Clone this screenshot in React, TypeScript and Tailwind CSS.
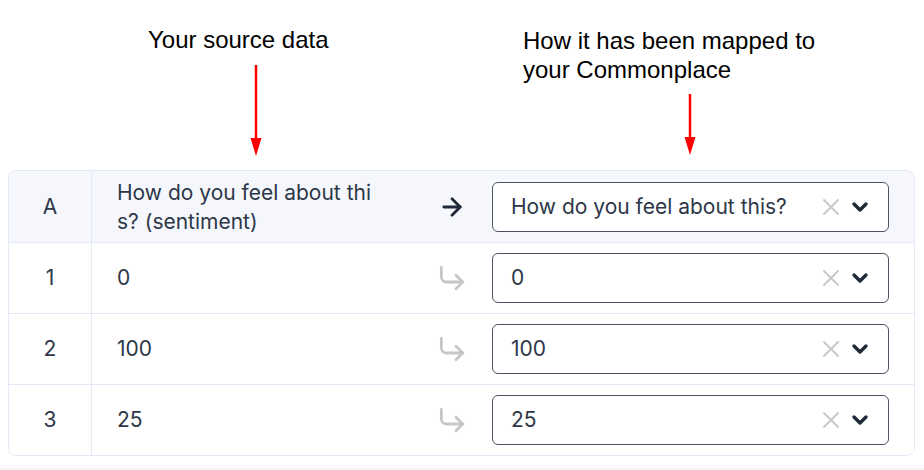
import React from "react";
import { ArrowRight, CornerDownRight, X, ChevronDown } from "lucide-react";

function RedArrow({ h }: { h: number }) {
  return (
    <svg width="14" height={h} viewBox={`0 0 14 ${h}`} className="block">
      <line x1="7" y1="0" x2="7" y2={h - 16} stroke="#ff0000" strokeWidth="2.5" />
      <polygon points={`1.5,${h - 18} 12.5,${h - 18} 7,${h}`} fill="#ff0000" />
    </svg>
  );
}

function Select({ value }: { value: string }) {
  return (
    <div className="w-[397px] h-[50px] rounded-[6px] border-[1.5px] border-[#4b5563] bg-white flex items-center pl-[18px] pr-[16px]">
      <span className="flex-1 text-[21px] text-[#2d3748] truncate">{value}</span>
      <X size={28} strokeWidth={1.7} className="text-[#c9c9c9] mr-[3px]" />
      <ChevronDown size={24} strokeWidth={3.4} className="text-[#1f2937]" />
    </div>
  );
}

const rows = [
  { n: "1", v: "0" },
  { n: "2", v: "100" },
  { n: "3", v: "25" },
];

export default function App() {
  return (
    <div className="w-[924px] h-[470px] bg-white overflow-hidden" style={{ fontFamily: "Inter, 'Noto Sans', sans-serif" }}>
      <div className="h-[170px] flex" style={{ fontFamily: "'Liberation Sans', Arial, sans-serif" }}>
        <div className="ml-[148px] w-[200px] pt-[25px]">
          <div className="text-[24px] leading-[29px] text-black whitespace-nowrap">Your source data</div>
          <div className="ml-[101px] mt-[11px]">
            <RedArrow h={91} />
          </div>
        </div>
        <div className="ml-[175px] w-[320px] pt-[26px]">
          <div className="text-[24px] leading-[29px] text-black whitespace-nowrap">
            How it has been mapped to
            <br />
            your Commonplace
          </div>
          <div className="ml-[160px] mt-[10px]">
            <RedArrow h={61} />
          </div>
        </div>
      </div>

      <div className="ml-[8px] w-[907px] border border-[#e3e9f6] rounded-[8px] overflow-hidden text-[#2d3748]">
        <div className="flex h-[72px] bg-[#f5f7fc] border-b border-[#e3e9f6]">
          <div className="w-[83px] border-r border-[#e3e9f6] flex items-center justify-center text-[21px]">A</div>
          <div className="flex flex-1 items-center">
            <div className="w-[340px] pl-[25px]">
              <div className="w-[266px] text-[21px] leading-[29px] break-all">How do you feel about this? (sentiment)</div>
            </div>
            <div className="w-[40px] flex justify-center">
              <ArrowRight size={28} strokeWidth={2.4} className="text-[#1f2937]" />
            </div>
            <div className="ml-[20px]">
              <Select value="How do you feel about this?" />
            </div>
          </div>
        </div>
        {rows.map((r, i) => (
          <div key={r.n} className={`flex ${i < 2 ? "h-[71px] border-b border-[#e3e9f6]" : "h-[70px]"} bg-white`}>
            <div className="w-[83px] border-r border-[#e3e9f6] flex items-center justify-center text-[21px]">{r.n}</div>
            <div className="flex flex-1 items-center">
              <div className="w-[340px] pl-[25px] text-[21px]">{r.v}</div>
              <div className="w-[40px] flex justify-center">
                <CornerDownRight size={32} strokeWidth={2.1} className="text-[#c6c6c6]" />
              </div>
              <div className="ml-[20px]">
                <Select value={r.v} />
              </div>
            </div>
          </div>
        ))}
      </div>
      <div className="mt-[12px] h-[14px] bg-[#f3f4f6]" />
    </div>
  );
}
